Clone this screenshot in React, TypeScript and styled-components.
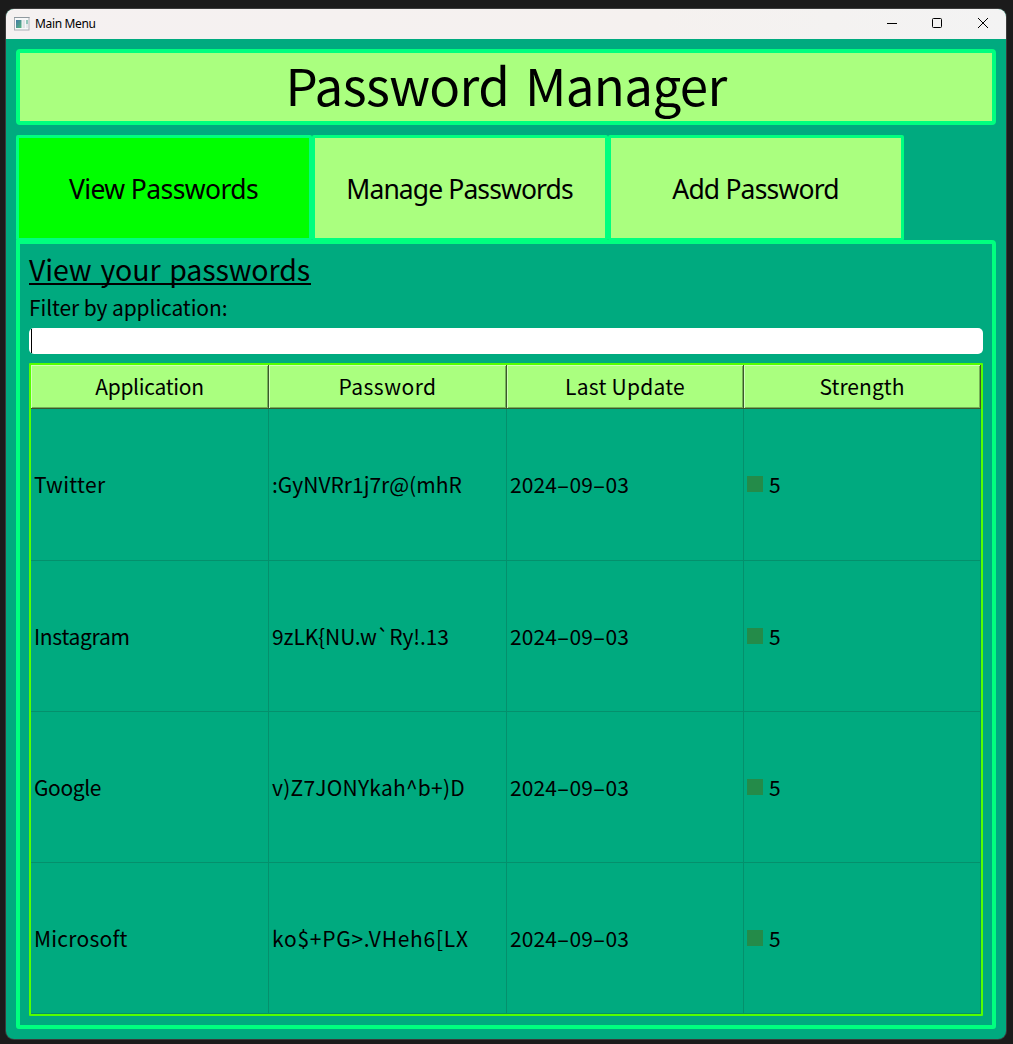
import React from 'react';
import styled, { createGlobalStyle } from 'styled-components';

const gothic = '"Noto Sans CJK JP", "Liberation Sans", sans-serif';
const humanist = '"Noto Sans", "Open Sans", sans-serif';
const teal = '#00aa7f';
const lime = '#aaff7f';
const mint = '#00ff7f';

const GlobalStyle = createGlobalStyle`
  * { box-sizing: border-box; }
  body { margin: 0; background: #1b1b1b; color: #000; }
`;

const Desktop = styled.div`
  width: 1013px;
  height: 1044px;
  padding: 9px 7px 5px 6px;
  background: #1b1b1b;
  overflow: hidden;
`;

const Window = styled.main`
  display: flex;
  flex-direction: column;
  width: 1000px;
  height: 1030px;
  border-radius: 8px;
  background: ${teal};
  box-shadow: 0 0 0 1px #3b3b3b;
  overflow: hidden;
`;

const TitleBar = styled.header`
  display: flex;
  align-items: center;
  flex: 0 0 30px;
  padding-left: 8px;
  background: linear-gradient(90deg, #f5f1f1 0%, #f5f1ef 65%, #f3f3f3 100%);
`;

const WindowTitle = styled.span`
  flex: 1;
  padding-left: 5px;
  font: 12px/30px ${humanist};
  letter-spacing: -0.35px;
`;

const WindowButtons = styled.div`
  display: flex;
  align-self: stretch;
`;

const WindowButton = styled.button`
  display: grid;
  place-items: center;
  width: 46px;
  padding: 0 0 2px;
  border: 0;
  background: none;

  &:first-child {
    width: 44px;
  }
`;

const Content = styled.div`
  display: flex;
  flex-direction: column;
  flex: 1;
  padding: 10px;
`;

const Banner = styled.h1`
  flex: 0 0 76px;
  margin: 0 0 10px;
  border: 4px solid ${mint};
  border-radius: 4px;
  background: ${lime};
  font: 400 51px/62px ${gothic};
  letter-spacing: -0.62px;
  word-spacing: 5px;
  text-align: center;
`;

const TabBar = styled.nav`
  display: flex;
  flex: 0 0 105px;
  min-height: 0;
`;

const Tab = styled.button<{ $active?: boolean; $spacing: number }>`
  width: 296px;
  height: 106px;
  padding: 2px 1px 0 0;
  border: 3px solid ${mint};
  border-radius: 2px;
  background: ${p => (p.$active ? '#00ff00' : lime)};
  color: #000;
  font: 400 26.5px/96px ${humanist};
  letter-spacing: ${p => p.$spacing}px;
  text-align: center;
`;

const Pane = styled.section`
  display: flex;
  flex-direction: column;
  flex: 1;
  padding: 9px;
  border: 4px solid ${mint};
  border-radius: 0 4px 3px 3px;
`;

const Heading = styled.h2`
  width: 282px;
  height: 32px;
  margin: 0 0 6px;
  border-bottom: 2px solid #000;
  font: 400 28.5px/31px ${gothic};
  letter-spacing: -0.1px;
  word-spacing: 2.5px;
  white-space: nowrap;
`;

const FilterLabel = styled.label`
  height: 37px;
  font: 400 21px/32px ${gothic};
  letter-spacing: -0.1px;
`;

const FilterInput = styled.div`
  flex: 0 0 26px;
  margin-bottom: 9px;
  padding: 1px 2px;
  border-radius: 5px;
  background: #fff;
`;

const Caret = styled.div`
  width: 1px;
  height: 24px;
  background: #000;
`;

const Table = styled.div`
  display: grid;
  grid-template-columns: 238px 238px 237px 237px;
  grid-template-rows: 44px 152px 151px 151px 151px;
  height: 653px;
  border: 2px solid #55ff00;
  border-radius: 1px;
`;

const HeaderCell = styled.div<{ $spacing: number }>`
  border-right: 1px solid #3b592c;
  border-bottom: 1px solid #3b592c;
  box-shadow: inset 1px 1px 0 #d0ffb8, inset -1px -1px 0 #76b158;
  background: ${lime};
  font: 400 21px/42px ${gothic};
  letter-spacing: ${p => p.$spacing}px;
  text-align: center;
`;

const Cell = styled.div<{ $spacing?: number }>`
  display: flex;
  align-items: center;
  padding: 0 0 1px 3px;
  border-right: 1px solid #04906c;
  border-bottom: 1px solid #04906c;
  font: 400 21px/30px ${gothic};
  letter-spacing: ${p => p.$spacing ?? 0}px;
  white-space: pre;
`;

const Dash = styled.span`
  display: inline-block;
  width: 12.5px;
  text-align: center;
  transform: scaleX(1.8);
`;

const StrengthCell = styled(Cell)`
  gap: 6px;
`;

const Swatch = styled.span`
  width: 16px;
  height: 16px;
  background: #248b49;
`;

const AppIcon = () => (
  <svg width="16" height="14" viewBox="0 0 16 14">
    <defs>
      <linearGradient id="screen" x1="0" y1="0" x2="1" y2="1">
        <stop offset="0" stopColor="#4479a6" />
        <stop offset="1" stopColor="#55b57e" />
      </linearGradient>
    </defs>
    <rect x="0.5" y="0.5" width="14.5" height="12.5" fill="#f7f8f9" stroke="#a9b0b5" />
    <path d="M0 .5h15.5" stroke="#8f999f" />
    <rect x="2" y="3" width="5.5" height="8" fill="url(#screen)" />
    <rect x="8.5" y="3" width="2.5" height="8" fill="#dfe4e6" />
    <rect x="12" y="3" width="2" height="4" fill="#92c7bb" />
    <rect x="12" y="7" width="2" height="4" fill="#e5e9eb" />
  </svg>
);

const headers = [
  { label: 'Application', spacing: -0.28 },
  { label: 'Password', spacing: 0.5 },
  { label: 'Last Update', spacing: 0.25 },
  { label: 'Strength', spacing: 0.05 },
];

const entries = [
  { app: 'Twitter', appSpacing: 0.3, password: ':GyNVRr1j7r@(mhR', spacing: 0 },
  { app: 'Instagram', appSpacing: -0.3, password: '9zLK{NU.w`Ry!.13', spacing: -0.12 },
  { app: 'Google', appSpacing: -0.4, password: 'v)Z7JONYkah^b+)D', spacing: 0.23 },
  { app: 'Microsoft', appSpacing: 0.25, password: 'ko$+PG>.VHeh6[LX', spacing: 0.74 },
];

export default function App() {
  return (
    <Desktop>
      <GlobalStyle />
      <Window>
        <TitleBar>
          <AppIcon />
          <WindowTitle>Main Menu</WindowTitle>
          <WindowButtons>
            <WindowButton aria-label="Minimize">
              <svg width="10" height="10"><path d="M0 5.5h10" stroke="#000" /></svg>
            </WindowButton>
            <WindowButton aria-label="Maximize">
              <svg width="10" height="10"><rect x=".5" y=".5" width="9" height="9" rx="1" fill="none" stroke="#000" /></svg>
            </WindowButton>
            <WindowButton aria-label="Close">
              <svg width="10" height="10"><path d="M0 0l10 10M10 0L0 10" stroke="#000" /></svg>
            </WindowButton>
          </WindowButtons>
        </TitleBar>
        <Content>
          <Banner>Password Manager</Banner>
          <TabBar>
            <Tab $active $spacing={-0.6}>View Passwords</Tab>
            <Tab $spacing={-0.9}>Manage Passwords</Tab>
            <Tab $spacing={-0.82}>Add Password</Tab>
          </TabBar>
          <Pane>
            <Heading>View your passwords</Heading>
            <FilterLabel>Filter by application:</FilterLabel>
            <FilterInput role="textbox"><Caret /></FilterInput>
            <Table>
              {headers.map(h => (
                <HeaderCell key={h.label} $spacing={h.spacing}>{h.label}</HeaderCell>
              ))}
              {entries.map(e => (
                <React.Fragment key={e.app}>
                  <Cell $spacing={e.appSpacing}>{e.app}</Cell>
                  <Cell $spacing={e.spacing}>{e.password}</Cell>
                  <Cell $spacing={0.1}><span>2024<Dash>-</Dash>09<Dash>-</Dash>03</span></Cell>
                  <StrengthCell><Swatch /><span>5</span></StrengthCell>
                </React.Fragment>
              ))}
            </Table>
          </Pane>
        </Content>
      </Window>
    </Desktop>
  );
}
